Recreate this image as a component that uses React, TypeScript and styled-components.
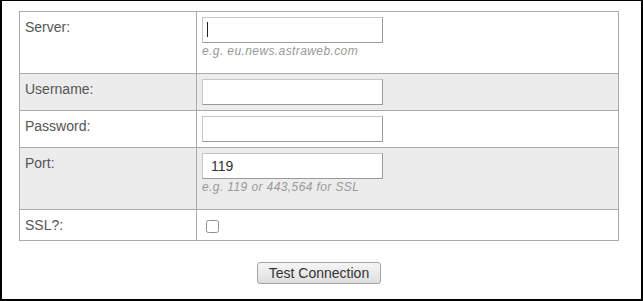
import styled, { createGlobalStyle } from "styled-components";

const GlobalStyle = createGlobalStyle`
  html, body {
    margin: 0;
    padding: 0;
    background: #fff;
  }
  body {
    font-family: "Liberation Sans", Arial, sans-serif;
  }
`;

export const Frame = styled.div`
  box-sizing: border-box;
  width: 643px;
  height: 301px;
  border-style: solid;
  border-color: #000;
  border-width: 1px 2px 2px 2px;
  padding: 10px 0 0 17px;
  background: #fff;
`;

export const Panel = styled.div`
  width: 600px;
  display: flex;
  flex-direction: column;
  align-items: center;
`;

export const Table = styled.table`
  width: 600px;
  border-collapse: collapse;
  border: 1px solid #aaa;
  font-size: 14px;
`;

export const Row = styled.tr<{ $shaded?: boolean }>`
  background: ${({ $shaded }) => ($shaded ? "#ececec" : "#fff")};
`;

export const LabelCell = styled.td`
  width: 166px;
  border: 1px solid #aaa;
  padding: 5px;
  vertical-align: top;
  color: #555;
  line-height: 20px;
`;

export const FieldCell = styled.td`
  border: 1px solid #aaa;
  padding: 5px;
  vertical-align: top;
  line-height: 20px;
`;

export const InputWrap = styled.div`
  position: relative;
  width: 181px;
  height: 26px;
`;

export const TextInput = styled.input`
  box-sizing: border-box;
  display: block;
  width: 181px;
  height: 26px;
  margin: 0;
  padding: 2px 8px;
  border: 1px solid;
  border-color: #c6c6c6 #9a9a9a #9a9a9a #c6c6c6;
  border-radius: 0;
  background: #fff;
  font-family: "Liberation Sans", Arial, sans-serif;
  font-size: 14px;
  color: #333;
  outline: none;
`;

export const Caret = styled.span`
  position: absolute;
  left: 5px;
  top: 5px;
  width: 1px;
  height: 15px;
  background: #222;
`;

export const Hint = styled.div`
  font-size: 12px;
  font-style: italic;
  color: #999;
  letter-spacing: 0.4px;
  line-height: 14px;
  margin: 1px 0 10px 0;
`;

export const Check = styled.input`
  width: 13px;
  height: 13px;
  margin: 5px 0 2px 4px;
  vertical-align: top;
  opacity: 0.8;
`;

export const Button = styled.button`
  margin-top: 21px;
  height: 22px;
  padding: 0 11px;
  border: 1px solid #a4a4a4;
  border-radius: 3px;
  background: linear-gradient(#f6f6f6, #dedede);
  font-family: "Liberation Sans", Arial, sans-serif;
  font-size: 14px;
  color: #333;
  line-height: 20px;
  cursor: pointer;
`;

export default function App() {
  return (
    <>
      <GlobalStyle />
      <Frame>
        <Panel>
          <Table>
            <tbody>
              <Row>
                <LabelCell>Server:</LabelCell>
                <FieldCell>
                  <InputWrap>
                    <TextInput type="text" defaultValue="" />
                    <Caret />
                  </InputWrap>
                  <Hint>e.g. eu.news.astraweb.com</Hint>
                </FieldCell>
              </Row>
              <Row $shaded>
                <LabelCell>Username:</LabelCell>
                <FieldCell>
                  <TextInput type="text" defaultValue="" />
                </FieldCell>
              </Row>
              <Row>
                <LabelCell>Password:</LabelCell>
                <FieldCell>
                  <TextInput type="password" defaultValue="" />
                </FieldCell>
              </Row>
              <Row $shaded>
                <LabelCell>Port:</LabelCell>
                <FieldCell>
                  <TextInput type="text" defaultValue="119" />
                  <Hint>e.g. 119 or 443,564 for SSL</Hint>
                </FieldCell>
              </Row>
              <Row>
                <LabelCell>SSL?:</LabelCell>
                <FieldCell>
                  <Check type="checkbox" />
                </FieldCell>
              </Row>
            </tbody>
          </Table>
          <Button type="button">Test Connection</Button>
        </Panel>
      </Frame>
    </>
  );
}
